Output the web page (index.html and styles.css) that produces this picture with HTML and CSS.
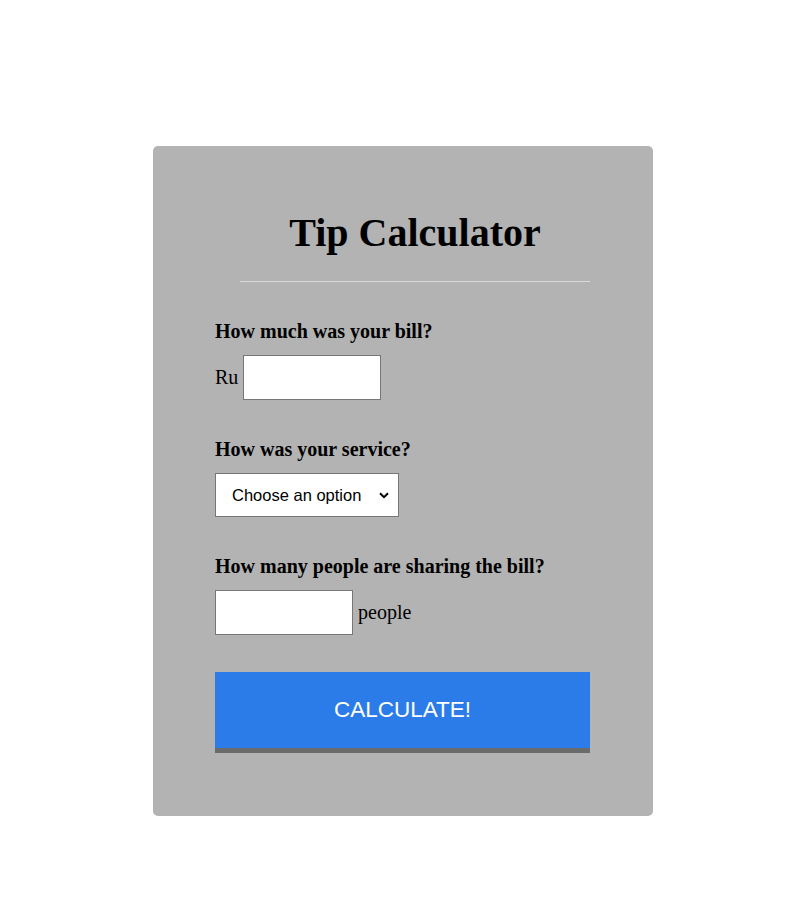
FILE: index.html
```html
<!DOCTYPE html>
<html>
<head>
<meta charset="utf-8">
<link rel="stylesheet" href="styles.css">
</head>
<body>
<div class="card">
  <h1 class="title">Tip Calculator</h1>
  <hr class="rule">
  <div class="field">
    <p class="label">How much was your bill?</p>
    <div class="row"><span class="unit">Ru</span><input class="box" type="text"></div>
  </div>
  <div class="field">
    <p class="label">How was your service?</p>
    <div class="row"><select class="choice"><option>Choose an option</option></select></div>
  </div>
  <div class="field">
    <p class="label">How many people are sharing the bill?</p>
    <div class="row"><input class="box" type="text"><span class="unit after">people</span></div>
  </div>
  <button class="calc">CALCULATE!</button>
</div>
</body>
</html>
```
FILE: styles.css
```css
html, body { margin: 0; padding: 0; background: #fff; }
body { font-family: "Liberation Serif", "Times New Roman", serif; color: #000; }
.card {
  box-sizing: border-box;
  width: 500px;
  height: 670px;
  margin: 146px 0 0 153px;
  background: #b3b3b3;
  border-radius: 5px;
  padding: 62px 38px 0 62px;
}
.title {
  margin: 0;
  text-align: center;
  font-size: 40px;
  font-weight: bold;
  line-height: 50px;
}
.rule {
  width: 350px;
  margin: 23px auto 0;
  border: 0;
  border-top: 1px solid #d9d9d9;
  height: 0;
}
.field { margin-top: 37px; }
.label {
  margin: 0 0 12px;
  font-size: 20px;
  font-weight: bold;
  line-height: 24px;
}
.row { display: flex; align-items: center; }
.unit { font-size: 20px; margin-right: 5px; }
.unit.after { margin: 0 0 0 5px; }
.box {
  box-sizing: border-box;
  width: 138px;
  height: 45px;
  border: 1px solid #777;
  background: #fff;
  padding: 0;
}
.choice {
  box-sizing: border-box;
  width: 184px;
  height: 44px;
  border: 1px solid #777;
  -webkit-appearance: none;
  appearance: none;
  background: #fff url("data:image/svg+xml;utf8,<svg xmlns='http://www.w3.org/2000/svg' width='10' height='7' viewBox='0 0 10 7'><path d='M1 1.2 L5 5.2 L9 1.2' fill='none' stroke='%23000' stroke-width='2'/></svg>") no-repeat right 9px center;
  font-family: "Liberation Sans", Arial, sans-serif;
  font-size: 16.5px;
  padding: 0 12px 0 16px;
  color: #000;
  border-radius: 0;
}
.calc {
  display: block;
  box-sizing: border-box;
  width: 375px;
  height: 81px;
  margin-top: 37px;
  background: #2b7ce9;
  border: 0;
  border-bottom: 5px solid #6b6b6b;
  color: #fff;
  font-family: "Liberation Sans", Arial, sans-serif;
  font-size: 22.5px;
  padding: 0;
}
```
